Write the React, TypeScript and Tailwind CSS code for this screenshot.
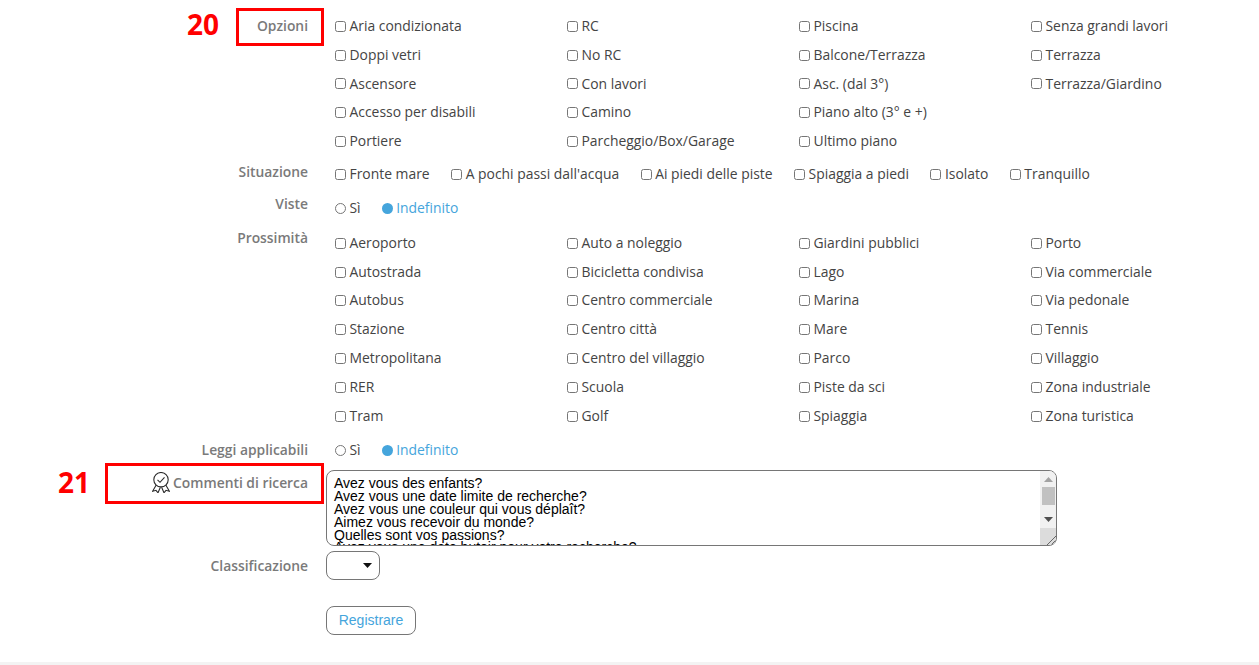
import { ReactNode } from 'react';

const OPZIONI = [
  ['Aria condizionata', 'RC', 'Piscina', 'Senza grandi lavori'],
  ['Doppi vetri', 'No RC', 'Balcone/Terrazza', 'Terrazza'],
  ['Ascensore', 'Con lavori', 'Asc. (dal 3°)', 'Terrazza/Giardino'],
  ['Accesso per disabili', 'Camino', 'Piano alto (3° e +)', ''],
  ['Portiere', 'Parcheggio/Box/Garage', 'Ultimo piano', ''],
];

const SITUAZIONE = ['Fronte mare', "A pochi passi dall'acqua", 'Ai piedi delle piste', 'Spiaggia a piedi', 'Isolato', 'Tranquillo'];

const PROSSIMITA = [
  ['Aeroporto', 'Auto a noleggio', 'Giardini pubblici', 'Porto'],
  ['Autostrada', 'Bicicletta condivisa', 'Lago', 'Via commerciale'],
  ['Autobus', 'Centro commerciale', 'Marina', 'Via pedonale'],
  ['Stazione', 'Centro città', 'Mare', 'Tennis'],
  ['Metropolitana', 'Centro del villaggio', 'Parco', 'Villaggio'],
  ['RER', 'Scuola', 'Piste da sci', 'Zona industriale'],
  ['Tram', 'Golf', 'Spiaggia', 'Zona turistica'],
];

const COMMENTI = `Avez vous des enfants?
Avez vous une date limite de recherche?
Avez vous une couleur qui vous déplaît?
Aimez vous recevoir du monde?
Quelles sont vos passions?
Avez vous une date butoir pour votre recherche?`;

function Check({ label }: { label: string }) {
  return (
    <label className="flex items-center h-[28.8px] whitespace-nowrap">
      <input type="checkbox" className="w-[11px] h-[11px] mr-[3.5px] ml-0" />
      {label}
    </label>
  );
}

function CheckGrid({ rows }: { rows: string[][] }) {
  return (
    <div className="grid grid-cols-[232px_232px_232px_232px]">
      {rows.flat().map((label, i) => (label ? <Check key={i} label={label} /> : <div key={i} />))}
    </div>
  );
}

function YesNo() {
  return (
    <div className="flex items-center h-[24px]">
      <input type="radio" className="w-[11px] h-[11px] mr-[3.5px]" />
      <span>Sì</span>
      <span className="w-[11px] h-[11px] rounded-full bg-[#45a5dc] ml-[21.5px] mr-[3px]" />
      <span className="text-[#45a5dc]">Indefinito</span>
    </div>
  );
}

function Row({ label, icon, className, children }: { label: string; icon?: ReactNode; className?: string; children: ReactNode }) {
  return (
    <div className={`flex ${className ?? ''}`}>
      <div className="w-[308px] shrink-0 flex justify-end items-center h-[26px] text-[13.85px] font-semibold text-[#7a7a7a]">
        {icon}
        {label}
      </div>
      <div className="ml-[27px]">{children}</div>
    </div>
  );
}

function RibbonIcon() {
  return (
    <svg width="18" height="21" viewBox="0 0 18 21" fill="none" stroke="#2b2b2b" strokeWidth="1.1" className="mr-[3px] mt-[-2px]">
      <circle cx="9" cy="7.7" r="7.2" />
      <path d="M5.5 7.8l2.5 2.5 4.5-5" />
      <path d="M4.2 13L0.6 19.2l3.4-.9L6 20.8 8.4 15.2" />
      <path d="M13.8 13l3.6 6.2-3.4-.9L12 20.8 9.6 15.2" />
    </svg>
  );
}

function TextareaChrome() {
  return (
    <div className="absolute right-[1px] top-[1px] bottom-[1px] w-[16px] flex flex-col items-center bg-[#f1f1f1] rounded-r-[7px] overflow-hidden">
      <svg width="9" height="5" viewBox="0 0 9 5" className="mt-[6px] shrink-0" fill="#a3a3a3">
        <path d="M4.5 0L9 5H0z" />
      </svg>
      <div className="mt-[5px] w-[13px] h-[18px] bg-[#c1c1c1] shrink-0" />
      <svg width="9" height="5" viewBox="0 0 9 5" className="mt-[12px] shrink-0" fill="#505050">
        <path d="M0 0h9L4.5 5z" />
      </svg>
      <div className="mt-auto w-full h-[17px] bg-[#dcdcdc] flex items-end justify-end shrink-0">
        <svg width="10" height="10" viewBox="0 0 10 10" stroke="#666" strokeWidth="1">
          <path d="M1 10L10 1M5 10l5-5" />
        </svg>
      </div>
    </div>
  );
}

export default function App() {
  return (
    <div className="relative w-[1259px] h-[665px] overflow-hidden bg-white text-[13.9px] text-[#444] font-['Open_Sans',sans-serif]">
      <div className="pt-[13px]">
        <Row label="Opzioni">
          <div className="mt-[-1px]">
            <CheckGrid rows={OPZIONI} />
          </div>
        </Row>
        <Row label="Situazione" className="mt-[3.5px]">
          <div className="mt-[0.63px] flex gap-[21.5px]">
            {SITUAZIONE.map(s => (
              <Check key={s} label={s} />
            ))}
          </div>
        </Row>
        <Row label="Viste" className="mt-[2px]">
          <div className="mt-[6px]">
            <YesNo />
          </div>
        </Row>
        <Row label="Prossimità" className="mt-[4px]">
          <div className="mt-[3.94px]">
            <CheckGrid rows={PROSSIMITA} />
          </div>
        </Row>
        <Row label="Leggi applicabili" className="mt-[7.06px]">
          <div className="mt-[1px]">
            <YesNo />
          </div>
        </Row>
        <Row label="Commenti di ricerca" icon={<RibbonIcon />} className="mt-[7px]">
          <div className="relative ml-[-9px] mt-[-0.53px] w-[731px] h-[76px]">
            <textarea
              readOnly
              defaultValue={COMMENTI}
              className="block w-full h-full border border-[#767676] rounded-[8px] px-[7px] py-[6.4px] text-[14px] leading-[12.8px] text-black overflow-hidden resize-none font-['Liberation_Sans',sans-serif]"
            />
            <TextareaChrome />
          </div>
        </Row>
        <Row label="Classificazione" className="mt-[7.5px]">
          <div className="relative ml-[-9px] mt-[-2.5px] w-[54px] h-[29px]">
            <select className="block w-full h-full appearance-none border border-[#767676] rounded-[8px] text-black">
              <option></option>
            </select>
            <svg width="9" height="5" viewBox="0 0 9 5" fill="#111" className="absolute left-[37px] top-[12px]">
              <path d="M0 0h9L4.5 5z" />
            </svg>
          </div>
        </Row>
        <div className="pl-[326px] mt-[26px]">
          <button className="w-[90px] h-[29px] border border-[#767676] rounded-[8px] text-[14px] text-[#45a5dc] font-['Liberation_Sans',sans-serif]">
            Registrare
          </button>
        </div>
      </div>

      {/* Annotations */}
      <div className="absolute left-[236px] top-[8px] w-[88px] h-[38px] border-[3px] border-[#ff0000]" />
      <div className="absolute left-[105px] top-[463px] w-[219px] h-[41px] border-[3px] border-[#ff0000]" />
      <div className="absolute left-[187px] top-[5px] text-[28px] leading-[38px] font-bold text-[#ff0000]">20</div>
      <div className="absolute left-[58px] top-[463px] text-[28px] leading-[38px] font-bold text-[#ff0000]">21</div>

      <div className="absolute left-0 right-0 bottom-0 h-[3px] bg-[#f3f3f3]" />
    </div>
  );
}
